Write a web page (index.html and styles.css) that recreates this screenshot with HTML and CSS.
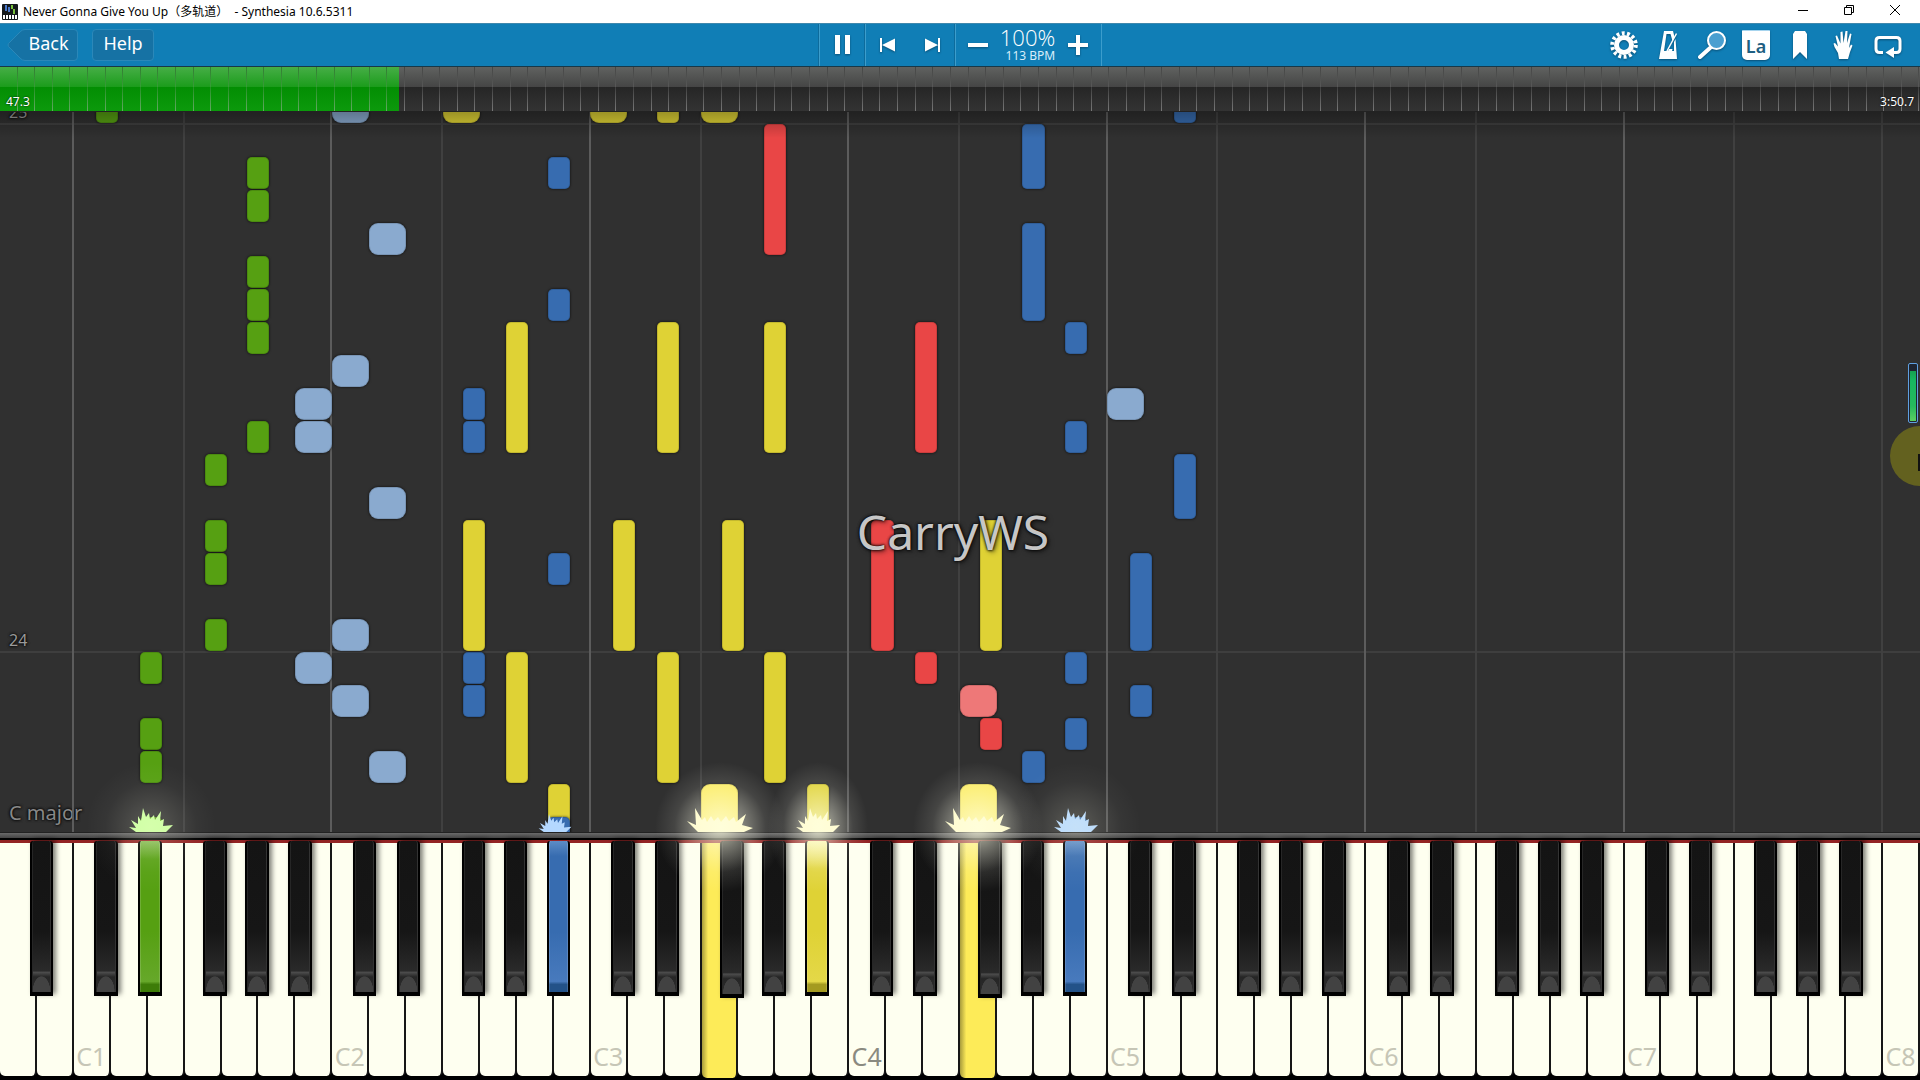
FILE: index.html
```html
<!DOCTYPE html>
<html lang="en">
<head>
<meta charset="utf-8">
<title>Never Gonna Give You Up（多轨道） - Synthesia 10.6.5311</title>
<link rel="stylesheet" href="styles.css">
</head>
<body>
<header class="titlebar">
  <svg class="app-icon" viewBox="0 0 16 16" aria-hidden="true">
    <rect width="16" height="16" rx="1" fill="#15191c"/>
    <path d="M3 1h2v6H3zM6 3h2v5H6z" fill="#4a78c8"/><path d="M9 1h2v4H9zM11 5h2v5h-2z" fill="#78c03c"/>
    <path d="M1 11h2v4H1zM4 11h2v4H4zM7 11h2v4H7zM10 11h2v4h-2zM13 11h2v4h-2z" fill="#fff"/>
  </svg>
  <h1 class="title">Never Gonna Give You Up（多轨道）&nbsp; - Synthesia 10.6.5311</h1>
  <div class="window-buttons">
    <button type="button" aria-label="Minimize"><svg viewBox="0 0 12 12"><path d="M1 6.500h10"/></svg></button>
    <button type="button" aria-label="Restore"><svg viewBox="0 0 12 12"><path d="M1.500 3.500h7v7h-7zM3.500 3.500v-2h7v7h-2"/></svg></button>
    <button type="button" aria-label="Close"><svg viewBox="0 0 12 12"><path d="M1 1l10 10M11 1L1 11"/></svg></button>
  </div>
</header>

<nav class="toolbar">
  <div class="nav-buttons">
    <button type="button" class="back">
      <svg class="back-shape" viewBox="0 0 71 32" preserveAspectRatio="none" aria-hidden="true"><path d="M18 .5H67Q70.500 .5 70.500 4V28Q70.500 31.500 67 31.500H18Q15 31.500 13 29L1.500 17.500Q.5 16 1.500 14.500L13 3Q15 .5 18 .5Z" fill="#1672a4" stroke="#2b88b9"/></svg>
      <span>Back</span>
    </button>
    <button type="button" class="help">Help</button>
  </div>
  <div class="transport">
    <div class="cell cell-pause">
      <button type="button" aria-label="Pause"><svg width="20" height="22" viewBox="0 0 20 22"><path d="M2 1h5v19H2zM12 1h5v19h-5z" fill="#fff"/></svg></button>
    </div>
    <div class="cell cell-skip">
      <button type="button" aria-label="Previous"><svg width="18" height="16" viewBox="0 0 18 16"><path d="M1 1h2v14H1zM16 1.500v13L3 8z" fill="#fff"/></svg></button>
      <button type="button" aria-label="Next"><svg width="18" height="16" viewBox="0 0 18 16"><path d="M15 1h2v14h-2zM2 1.500v13L15 8z" fill="#fff"/></svg></button>
    </div>
    <div class="cell cell-speed">
      <button type="button" aria-label="Slower"><svg width="22" height="22" viewBox="0 0 22 22"><path d="M1 9h20v4H1z" fill="#fff"/></svg></button>
      <div class="speed"><span class="percent">100%</span><span class="bpm">113 BPM</span></div>
      <button type="button" aria-label="Faster"><svg width="22" height="22" viewBox="0 0 22 22"><path d="M1 9h8V1h4v8h8v4h-8v8H9v-8H1z" fill="#fff"/></svg></button>
    </div>
  </div>
  <div class="tools">
    <button type="button" aria-label="Settings"><svg viewBox="0 0 30 30"><circle cx="15" cy="15" r="7.500" fill="none" stroke="#fff" stroke-width="5"/><circle cx="15" cy="15" r="11.800" fill="none" stroke="#fff" stroke-width="4" stroke-dasharray="2.900 2.400"/></svg></button>
    <button type="button" aria-label="Metronome"><svg viewBox="0 0 30 30"><path d="M11 1h9l1.500 6-2 4L17.500 4h-4L11 21h4l1-2h3.500l-.5 2h2L21 12l1.500-3L24 29H6z" fill="#fff"/><path d="M14 21l9.500-17.500" stroke="#fff" stroke-width="1.500"/></svg></button>
    <button type="button" aria-label="Zoom"><svg viewBox="0 0 30 30"><path d="M3 27l10-9" stroke="#fff" stroke-width="4" stroke-linecap="round"/><circle cx="19.500" cy="10.500" r="8.500" fill="#4a9fd0" stroke="#fff" stroke-width="2"/></svg></button>
    <button type="button" aria-label="Note labels"><span class="label-chip">La</span></button>
    <button type="button" aria-label="Bookmarks"><svg viewBox="0 0 30 30"><path d="M10 1h10l2 3v25l-7-7-7 7V4z" fill="#fff"/></svg></button>
    <button type="button" aria-label="Hands"><svg viewBox="0 0 30 30"><path d="M10 29l-1-6-3.500-6L4.500 13.500l1.500-.5 3 3.500L6.500 6l1.500-.5 3.500 8L11.500 2l2-.5 1 11.500L16.500 1h2L18 13l3-9.500 1.500.5-2 11-.5 3 2-3.500 1.500 1L21 22l-2 7z" fill="#fff"/></svg></button>
    <button type="button" aria-label="Loop"><svg viewBox="0 0 30 30"><path d="M10 22.500H6.500Q3 22.500 3 19v-8Q3 7.500 6.500 7.500h17Q27 7.500 27 11v8Q27 22.500 23.500 22.500H20" fill="none" stroke="#fff" stroke-width="3"/><path d="M12.500 22.500L21 17v11z" fill="#fff"/></svg></button>
  </div>
</nav>

<div class="timeline">
  <div class="elapsed"></div>
  <div class="ticks" id="ticks"></div>
  <div class="times"><span>47.3</span><span>3:50.7</span></div>
</div>

<main class="stage">
  <section class="roll" id="roll" aria-label="Falling notes">
    <div class="measure measure-25"><span>25</span></div>
    <div class="measure measure-24"><span>24</span></div>
    <div class="signature">C major</div>
    <div class="watermark">CarryWS</div>
    <div class="meter"><i></i></div>
    <div class="pointer"></div>
  </section>
  <div class="rail"></div>
  <section class="keyboard" aria-label="Piano keyboard">
    <div class="white-keys" id="white-keys"></div>
    <div class="black-keys" id="black-keys"></div>
  </section>
  <div class="glows" id="glows"></div>
</main>
<script src="piano.js"></script>
</body>
</html>
```

FILE: styles.css
```css
* { box-sizing: border-box; }

body {
  margin: 0;
  height: 100vh;
  min-height: 600px;
  display: flex;
  flex-direction: column;
  overflow: hidden;
  background: #000;
  color: #fff;
  font-family: "Noto Sans", "Noto Sans CJK SC", sans-serif;
}

button {
  margin: 0;
  padding: 0;
  border: 0;
  background: none;
  color: inherit;
  font: inherit;
  display: flex;
  align-items: center;
  justify-content: center;
}

/* Window title bar */
.titlebar {
  height: 23px;
  flex: none;
  display: flex;
  align-items: center;
  padding: 0 2px;
  background: #fff;
  color: #000;
}
.app-icon { width: 16px; height: 16px; }
.title {
  flex: 1;
  margin: 0 0 0 5px;
  font-size: 12px;
  line-height: 20px;
  font-weight: 400;
}
.window-buttons { display: flex; height: 100%; padding-bottom: 3px; }
.window-buttons button { width: 46px; }
.window-buttons svg { width: 12px; height: 12px; fill: none; stroke: #000; }

/* Toolbar */
.toolbar {
  height: 44px;
  flex: none;
  display: grid;
  grid-template-columns: 1fr auto 1fr;
  background: #107eb6;
  border-top: 1px solid #3f88ad;
  border-bottom: 1px solid #183848;
}
.toolbar svg { filter: drop-shadow(0 1px 1px #0a4f75); }
.nav-buttons {
  display: flex;
  align-items: center;
  gap: 14px;
  padding-left: 7px;
  font-size: 18px;
  line-height: 26px;
}
.nav-buttons button { height: 32px; padding-bottom: 5px; }
.back { position: relative; width: 71px; padding-left: 12px; }
.back .back-shape { position: absolute; inset: 0; width: 100%; height: 100%; filter: none; }
.back span { position: relative; }
.help { width: 62px; background: #1672a4; border: 1px solid #2b88b9; border-radius: 4px; }
.transport { display: flex; border-right: 1px solid #3c9dcc; }
.cell {
  display: flex;
  align-items: center;
  justify-content: space-around;
  border-left: 1px solid #3c9dcc;
  box-shadow: -1px 0 #0d6b9c;
}
.cell-pause { width: 46px; padding-left: 2px; }
.cell-skip { width: 90px; }
.cell-speed { width: 146px; justify-content: space-between; padding: 0 12px 0 11px; }
.speed { display: flex; flex-direction: column; align-items: flex-end; }
.percent { font-family: "Open Sans", "Noto Sans", sans-serif; font-weight: 300; font-size: 22px; line-height: 22px; }
.bpm { font-size: 12px; line-height: 16px; color: #d8eefa; }
.tools { display: flex; justify-content: flex-end; padding-right: 10px; }
.tools button { width: 44px; }
.tools svg { width: 30px; height: 30px; }
.label-chip {
  width: 28px;
  height: 30px;
  padding-top: 3px;
  border-top: 1px solid #a6d4ee;
  border-radius: 1px 1px 5px 5px;
  background: #fff;
  color: #1e5f82;
  font-size: 18px;
  line-height: 24px;
  font-weight: 600;
  box-shadow: 0 1px 2px #0a4f75;
}

/* Song progress */
.timeline {
  height: 45px;
  flex: none;
  position: relative;
  background: linear-gradient(#606260, #454545 45%, #262626 46%, #333);
  border-bottom: 1px solid #222;
}
.elapsed {
  width: 20.8%;
  height: 100%;
  background: linear-gradient(#46ae46, #1c9c1c 45%, #038e03 46%, #0c9a0c);
}
.ticks { position: absolute; inset: 0; display: flex; }
.ticks i {
  flex: 1;
  border-right: 1px solid;
  border-image: linear-gradient(rgba(0, 0, 0, .3), rgba(160, 160, 160, .2) 45%, rgba(180, 180, 180, .55)) 1;
}
.times {
  position: absolute;
  inset: auto 6px 0;
  display: flex;
  justify-content: space-between;
  font-size: 12px;
  line-height: 18px;
  text-shadow: 0 0 2px #000;
}

/* Note roll */
.stage { flex: 1; min-height: 0; display: flex; flex-direction: column; position: relative; }
.roll {
  --step: 33px;
  --line: 180px;
  flex: 1;
  position: relative;
  overflow: hidden;
  background: #303030;
}
.roll::after {
  content: "";
  position: absolute;
  inset: 0 0 auto;
  height: 26px;
  background: linear-gradient(rgba(0, 0, 0, .3), rgba(0, 0, 0, 0));
}
.guide { position: absolute; top: 0; bottom: 0; width: 2px; margin-left: -2px; background: #404040; }
.guide-c { background: #5c5c5c; }
.measure {
  position: absolute;
  left: 0;
  right: 0;
  height: 2px;
  margin-bottom: -1px;
  background: #3e3e3e;
  color: #9a9a9a;
  font-size: 16px;
  line-height: 22px;
}
.measure span { position: absolute; left: 9px; bottom: 2px; text-shadow: 0 0 3px #000, 0 0 3px #000; }
.measure-24 { bottom: var(--line); }
.measure-25 { bottom: calc(var(--line) + 16 * var(--step)); }
.note {
  position: absolute;
  border-radius: 5px;
  box-shadow: inset 0 0 0 1px rgba(0, 0, 0, .12), 0 0 2px 1px rgba(0, 0, 0, .35);
}
.note.wide { border-radius: 9px; }
.green { background: #56a012; }
.blue { background: #376cb0; }
.lightblue { background: #8aaacf; }
.yellow { background: #dfd235; }
.lightyellow { background: #fbec62; }
.red { background: #e94646; }
.lightred { background: #ee7878; }
.signature {
  position: absolute;
  left: 9px;
  bottom: 5px;
  color: #888;
  font-size: 20px;
  line-height: 28px;
  text-shadow: 0 0 3px #000, 0 0 3px #000;
}
.watermark {
  position: absolute;
  inset: 385px 14px auto 0;
  z-index: 2;
  text-align: center;
  color: rgba(235, 235, 235, .85);
  font-size: 48px;
  line-height: 70px;
  text-shadow: 0 0 3px #000, 0 0 3px rgba(0, 0, 0, .7), 2px 2px 5px rgba(0, 0, 0, .5);
}
.meter {
  position: absolute;
  right: 2px;
  top: 251px;
  width: 10px;
  height: 60px;
  padding: 7px 1px 1px;
  border: 1px solid #5f9fe0;
  border-radius: 2px;
  background: #1e2430;
}
.meter i { display: block; height: 100%; background: linear-gradient(#16a050, #18b860 20%, #26b85c 70%, #5ccf62); }
.pointer {
  position: absolute;
  right: -30px;
  top: 314px;
  width: 60px;
  height: 60px;
  border-radius: 50%;
  background: #63611f linear-gradient(#111, #111) 28px 28px / 2px 17px no-repeat;
}
.spark { position: absolute; bottom: 0; transform: translateX(-50%); }
.spark.green { background: none; color: #c9ff9c; }
.spark.blue { background: none; color: #b4d8ff; }
.spark.yellow { background: none; color: #fffbc4; }

/* Keyboard */
.rail {
  height: 8px;
  flex: none;
  border-top: 1px solid #222;
  border-bottom: 2px solid #000;
  background: linear-gradient(#6a6a6a, #444);
}
.keyboard {
  height: 240px;
  flex: none;
  position: relative;
  border-top: 3px solid #932424;
  background: #000;
}
.white-keys { display: flex; height: 100%; padding-bottom: 4px; }
.white-key {
  flex: 1;
  min-width: 0;
  display: flex;
  align-items: flex-end;
  justify-content: center;
  border-right: 2px solid #161616;
  border-radius: 0 0 5px 5px;
  background: #fefff0;
  color: #c6c6b6;
  font-size: 25px;
  line-height: 40px;
}
.white-key.middle { color: #8a8a80; }
.white-key.pressed { margin-bottom: -2px; background: linear-gradient(90deg, #a89c3c, #fdeb58 18%); }
.black-keys { position: absolute; inset: -2px 0 auto; height: 155px; }
.black-key {
  position: absolute;
  top: 0;
  height: 100%;
  margin-left: -1px;
  border: solid #000;
  border-width: 0 2px 4px;
  border-radius: 3px 3px 0 0;
  background:
    radial-gradient(ellipse 9px 16px at 50% 100%, #424242 95%, transparent) bottom / 100% 16px no-repeat,
    linear-gradient(#141414, #161616 60%, #2a2a2a 86%, #4c4c4c 87%, #262626 90%, #2c2c2c);
  box-shadow: inset 1px 0 #262626, inset -1px 0 #333, 3px -2px 5px rgba(0, 0, 0, .5);
}
.black-key.sunk { height: 157px; }
.black-key.pressed { box-shadow: inset 1px 0 rgba(255, 255, 255, .15), inset -1px 0 rgba(255, 255, 255, .15); }
.black-key.green { background: linear-gradient(#86bb55, #56a012 12%, #56a012 60%, #66a82a 93%, #3d7c08 95%); }
.black-key.blue { background: linear-gradient(#5d8cc6, #376cb0 10%, #376cb0 60%, #487abd 93%, #235288 95%); }
.black-key.yellow { background: linear-gradient(#f8f3a0, #dfd235 18%, #dfd235 60%, #e4d848 93%, #a49a20 95%); }
.glows { position: absolute; inset: 0; overflow: hidden; pointer-events: none; }
.glow {
  position: absolute;
  bottom: 188px;
  width: 130px;
  height: 130px;
  transform: translateX(-50%);
  background: radial-gradient(closest-side, rgba(255, 255, 225, .75), rgba(255, 255, 235, .4) 35%, rgba(255, 255, 240, .1) 70%, transparent);
}
.glow.small { opacity: .3; }
.glow.medium { width: 100px; }
```

FILE: piano.js
```js
// Horizontal position of each pitch within its octave, in white-key widths.
const WHITE = { C: 0, D: 1, E: 2, F: 3, G: 4, A: 5, B: 6 };
const BLACK = { 'C#': 0.583, 'D#': 1.767, 'F#': 3.527, 'G#': 4.672, 'A#': 5.83 };
const BLACK_WIDTH = 0.64;
const WHITE_COUNT = 52;
const percent = units => (units / WHITE_COUNT * 100) + '%';

function place(pitch) {
  const name = pitch.slice(0, -1);
  const octave = Number(pitch.slice(-1));
  const black = name in BLACK;
  return { black, x: 2 + (octave - 1) * 7 + (black ? BLACK[name] : WHITE[name]) };
}

function add(parent, className, style) {
  const el = document.createElement('div');
  el.className = className;
  Object.assign(el.style, style);
  parent.append(el);
  return el;
}

// Measures of the song
const ticks = document.getElementById('ticks');
for (let i = 0; i < 109; i++) ticks.append(document.createElement('i'));

// Octave guides at every C and F
const roll = document.getElementById('roll');
for (let octave = 1; octave <= 8; octave++) {
  add(roll, octave < 8 ? 'guide guide-c' : 'guide', { left: percent(place('C' + octave).x) });
  if (octave < 8) add(roll, 'guide', { left: percent(place('F' + octave).x) });
}

// pitch, colour, then start:length pairs in sixteenths from measure 24
const NOTES = [
  ['C#1', 'green', '16:1'],
  ['G#1', 'green', '14:1 13:1 11:1 10:1 9:1 6:1'],
  ['F#1', 'green', '5:1 3:1 2:1 0:1'],
  ['D#1', 'green', '-1:1 -3:1 -4:1 -6:1'],
  ['B1', 'lightblue', '7:1 6:1 -1:1'],
  ['C2', 'lightblue', '16:1 8:1 0:1 -2:1'],
  ['D2', 'lightblue', '12:1 4:1 -4:1'],
  ['C5', 'lightblue', '7:1'],
  ['F2', 'yellow', '16:1'],
  ['C3', 'yellow', '16:1'],
  ['F3', 'yellow', '16:1'],
  ['F#2', 'blue', '7:1 6:1 -1:1 -2:1'],
  ['F#2', 'yellow', '0:4'],
  ['G#2', 'yellow', '6:4 -4:4'],
  ['A#2', 'yellow', '-8:4'],
  ['A#2', 'blue', '14:1 10:1 2:1 -6:1'],
  ['C#3', 'yellow', '0:4'],
  ['D#3', 'yellow', '16:1 6:4 -4:4'],
  ['F#3', 'yellow', '0:4'],
  ['G#3', 'red', '12:4'],
  ['G#3', 'yellow', '6:4 -4:4'],
  ['A#3', 'yellow', '-8:4'],
  ['F3', 'lightyellow', '-8:4'],
  ['C#4', 'red', '0:4'],
  ['D#4', 'red', '6:4 -1:1'],
  ['F4', 'lightred', '-2:1'],
  ['F4', 'lightyellow', '-8:4'],
  ['F#4', 'yellow', '0:4'],
  ['F#4', 'red', '-3:1'],
  ['G#4', 'blue', '14:2 10:3 -4:1'],
  ['A#4', 'blue', '9:1 6:1 -1:1 -3:1 -6:1'],
  ['C#5', 'blue', '0:3 -2:1'],
  ['D#5', 'blue', '16:1 4:2']
];
for (const [pitch, colour, times] of NOTES) {
  const { black, x } = place(pitch);
  for (const time of times.split(' ')) {
    const [start, length] = time.split(':').map(Number);
    add(roll, 'note ' + colour + (black ? '' : ' wide'), {
      left: percent(x + (black ? 0.02 : -0.01)),
      width: percent(black ? 0.6 : 1),
      bottom: `calc(var(--line) + ${start} * var(--step) + 1px)`,
      height: `calc(${length} * var(--step) - 1px)`
    });
  }
}

// Keys
const PRESSED = { 'D#1': 'green', 'A#2': 'blue', 'F3': 'yellow', 'A#3': 'yellow', 'F4': 'yellow', 'A#4': 'blue' };
const SUNK = ['F#3', 'F#4'];
const whiteKeys = document.getElementById('white-keys');
const blackKeys = document.getElementById('black-keys');
for (let i = 0; i < WHITE_COUNT; i++) {
  const octave = Math.floor((i + 5) / 7);
  const pitch = 'CDEFGAB'[(i + 5) % 7] + octave;
  const key = add(whiteKeys, 'white-key');
  if (pitch[0] === 'C') key.textContent = pitch;
  if (pitch === 'C4') key.classList.add('middle');
  if (PRESSED[pitch]) key.classList.add('pressed');
}
for (let octave = 0; octave < 8; octave++) {
  for (const name of Object.keys(BLACK)) {
    if (octave === 0 && name !== 'A#') continue;
    const pitch = name + octave;
    const key = add(blackKeys, 'black-key', { left: percent(place(pitch).x), width: percent(BLACK_WIDTH) });
    if (PRESSED[pitch]) key.classList.add('pressed', PRESSED[pitch]);
    if (SUNK.includes(pitch)) key.classList.add('sunk');
  }
}

// Sparks thrown up where a note meets its key
const NARROW = 'M7 24L0 19L7 20L2 12L9 16L9 8L12 13L14 0L17 9L20 5L21 11L25 7L26 12L32 3L31 13L35 11L34 18L44 17L37 24Z';
const WIDE = 'M11 24L0 13L9 17L8 0L15 12L18 9L20 14L24 8L27 13L31 9L34 14L39 8L42 13L47 9L49 14L59 6L55 17L66 20L57 24Z';
const glows = document.getElementById('glows');
function spark(pitch, colour, size, glow, shift = 0) {
  const { black, x } = place(pitch);
  const centre = percent(x + shift + (black ? BLACK_WIDTH / 2 : 0.5));
  const box = black ? [44, 24] : [66, 24];
  const el = add(roll, 'spark ' + colour, { left: centre, width: box[0] * size + 'px', height: box[1] * size + 'px' });
  el.innerHTML = `<svg width="100%" height="100%" viewBox="0 0 ${box.join(' ')}"><path d="${black ? NARROW : WIDE}" fill="currentColor"/></svg>`;
  if (glow) add(glows, 'glow ' + glow, { left: centre });
}
spark('D#1', 'green', 1, 'small');
spark('A#2', 'blue', 0.75, '', -0.13);
spark('F3', 'yellow', 1, 'large');
spark('A#3', 'yellow', 1, 'medium');
spark('F4', 'yellow', 1, 'large');
spark('A#4', 'blue', 1, 'small');
```
